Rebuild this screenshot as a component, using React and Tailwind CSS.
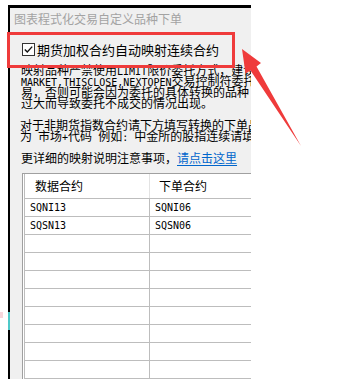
const rows = [
  ["SQNI13", "SQNI06"],
  ["SQSN13", "SQSN06"],
  ["", ""],
  ["", ""],
  ["", ""],
  ["", ""],
  ["", ""],
  ["", ""],
  ["", ""],
  ["", ""],
];

function M({ children }) {
  return <span className="font-['DejaVu_Sans_Mono',monospace] text-[10px]">{children}</span>;
}

function Line({ children }) {
  return <div className="whitespace-nowrap h-[11px] leading-[11px]">{children}</div>;
}

function Arrow() {
  return (
    <svg className="absolute left-0 top-0 pointer-events-none" width="349" height="379" viewBox="0 0 349 379">
      <polygon
        points="242,49 261,63 256.5,66.5 301,146 250.5,70.5 245.5,73.5"
        fill="#ef3b3b"
      />
    </svg>
  );
}

export default function App() {
  return (
    <div className="relative w-[349px] h-[379px] overflow-hidden bg-white font-['Noto_Sans_CJK_SC',sans-serif] text-black">
      <div className="flex h-full flex-col pt-[5px]">
        <div className="ml-[8px] w-[243px] h-[3px] bg-black" />
        <div className="flex flex-1 min-h-0">
          {/* chart peeking from behind */}
          <div className="w-[8px] flex flex-col">
            <div className="h-[304px]" />
            <div className="h-[6px] w-[3px] bg-[#f6d6dc]" />
          </div>
          <div className="w-[2px] flex flex-col bg-black">
            <div className="h-[304px]" />
            <div className="h-[18px] bg-[#4fc9c9]" />
          </div>

          {/* dialog */}
          <div className="w-[241px] bg-[#f0f0f0] overflow-hidden flex flex-col">
            <div className="h-[24px] pt-[3px] pl-[4px] text-[12px] leading-[16px] text-[#a3a3a3] whitespace-nowrap">
              图表程式化交易自定义品种下单
            </div>

            <div className="mt-[15px] pl-[12px] flex items-center gap-[2px] h-[13px]">
              <svg width="13" height="13" viewBox="0 0 13 13" className="shrink-0">
                <rect x="0.5" y="0.5" width="12" height="12" fill="#fff" stroke="#333" />
                <path d="M2.8 6.4 L5.3 9 L10.2 3.6" fill="none" stroke="#111" strokeWidth="1.4" />
              </svg>
              <span className="text-[13px] leading-[13px] whitespace-nowrap">期货加权合约自动映射连续合约</span>
            </div>

            <div className="mt-[8px] pl-[11px] text-[12px]">
              <Line>映射品种严禁使用<M>LIMIT</M>限价委托方式，建议</Line>
              <Line><M>MARKET,THISCLOSE,NEXTOPEN</M>交易控制符委托</Line>
              <Line>易，否则可能会因为委托的具体转换的品种</Line>
              <Line>过大而导致委托不成交的情况出现。</Line>
            </div>

            <div className="mt-[11px] pl-[10px] text-[12px]">
              <Line>对于非期货指数合约请下方填写转换的下单品</Line>
              <Line>为<M> </M>市场<M>+</M>代码<M> </M>例如<M>: </M>中金所的股指连续请填</Line>
            </div>

            <div className="mt-[11px] pl-[11px] text-[12px] leading-[12px] whitespace-nowrap">
              更详细的映射说明注意事项，<span className="text-[#0066cc] underline underline-offset-2">请点击这里</span>
            </div>

            <div className="mt-[9px] ml-[12px] w-[260px] flex-1 bg-white border-l border-t border-[#a0a0a0] pl-[1px]">
              <div className="border-l border-[#bdbdbd] h-full">
                <div className="flex h-[25px] border-b border-[#bdbdbd] text-[12px] leading-[24px]">
                  <div className="w-[125px] pl-[10px] border-r border-[#e3e3e3]">数据合约</div>
                  <div className="pl-[9px]">下单合约</div>
                </div>
                {rows.map((r, i) => (
                  <div key={i} className="flex h-[18px] border-b border-[#bdbdbd] font-['DejaVu_Sans_Mono',monospace] text-[10px] leading-[17px]">
                    <div className="w-[125px] pl-[5px] border-r border-[#bdbdbd]">{r[0]}</div>
                    <div className="pl-[5px]">{r[1]}</div>
                  </div>
                ))}
              </div>
            </div>
          </div>
        </div>
      </div>

      {/* annotation */}
      <div className="absolute left-[7px] top-[32px] w-[228px] h-[36px] border-[3px] border-[#ef3b3b]" />
      <Arrow />
    </div>
  );
}
